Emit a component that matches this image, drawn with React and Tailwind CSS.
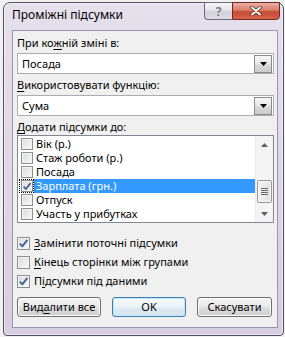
import React from "react";

function Tick({ color = "#42609e" }) {
  return (
    <svg width="11" height="11" viewBox="0 0 11 11" className="block">
      <path d="M1.8 5.6 L4.3 8.3 L9.4 1.8" stroke={color} strokeWidth="1.9" fill="none" strokeLinejoin="round" />
    </svg>
  );
}

function Check({ checked, small }) {
  return (
    <span
      className={
        small
          ? "w-[12px] h-[12px] border border-[#8e8f8f] bg-[linear-gradient(135deg,#d9d9d9,#fbfbfb)] shadow-[inset_0_0_0_1px_#f4f4f4] flex items-center justify-center shrink-0"
          : "w-[13px] h-[13px] border border-[#8e8f8f] bg-[linear-gradient(135deg,#d9d9d9,#fbfbfb)] shadow-[inset_0_0_0_1px_#f4f4f4] flex items-center justify-center shrink-0"
      }
    >
      {checked && <Tick />}
    </span>
  );
}

function DropArrow() {
  return (
    <svg width="7" height="4" viewBox="0 0 7 4" className="block">
      <path d="M0 0 H7 L3.5 4 Z" fill="#000" />
    </svg>
  );
}

function Combo({ value }) {
  return (
    <div className="h-[21px] border border-[#abadb3] bg-white flex items-center">
      <div className="flex-1 pl-[4px] leading-[19px]">{value}</div>
      <div className="w-[18px] h-[18px] mr-[1px] border border-[#8a8a8a] bg-[linear-gradient(to_bottom,#f5f5f5_0%,#e9e9e9_45%,#d9d9d9_55%,#cdcdcd_100%)] flex items-center justify-center">
        <DropArrow />
      </div>
    </div>
  );
}

const items = [
  { t: "Вік (р.)" },
  { t: "Стаж роботи (р.)" },
  { t: "Посада" },
  { t: "Зарплата (грн.)", checked: true, sel: true },
  { t: "Отпуск" },
  { t: "Участь у прибутках" },
];

function Btn({ children, def, w }) {
  return (
    <div
      className={
        def
          ? `${w} h-[20px] rounded-[3px] border border-[#3c7fb1] bg-[linear-gradient(to_bottom,#f5fafd_0%,#ecf5fb_45%,#dfeaf2_55%,#d6e4ee_100%)] shadow-[inset_0_0_0_1px_#c4e6f9] flex items-center justify-center leading-[18px]`
          : `${w} h-[20px] rounded-[3px] border border-[#707070] bg-[linear-gradient(to_bottom,#f2f2f2_0%,#ebebeb_45%,#dddddd_55%,#cfcfcf_100%)] shadow-[inset_0_0_0_1px_#fcfcfc] flex items-center justify-center leading-[18px]`
      }
    >
      {children}
    </div>
  );
}

export default function App() {
  return (
    <div className="w-[285px] h-[337px] overflow-hidden bg-[#f1f1f1] pt-[2px] pl-[3px] font-['Noto_Sans','DejaVu_Sans',sans-serif] text-[11px] text-black">
      <div className="w-[281px] h-[334px] border border-[#50505f] rounded-t-[7px] rounded-b-[4px] bg-[linear-gradient(to_bottom,#e6e0ec,#d7cee1)] shadow-[inset_0_0_0_1px_rgba(255,255,255,0.55)] flex flex-col">
        <div className="h-[27px] flex justify-between items-start">
          <div className="pl-[8px] pt-[4px] leading-[16px] text-[12px]">Проміжні підсумки</div>
          <div className="flex -mt-[1px] mr-[3px]">
            <div className="w-[28px] h-[18px] border border-[#6b6a7b] border-r-0 rounded-bl-[4px] bg-[linear-gradient(to_bottom,#f7f5f9_0%,#e6e3ea_45%,#d2ced9_55%,#e0dde6_100%)] flex items-center justify-center">
              <span className="font-bold text-[13px] leading-[14px] text-[#77778a] [text-shadow:0_0_1px_#fff,0_0_1px_#fff]">?</span>
            </div>
            <div className="w-[48px] h-[18px] border border-[#6e2a22] rounded-br-[4px] bg-[linear-gradient(to_bottom,#eab0a3_0%,#d9806c_45%,#c84a32_55%,#d4644b_100%)] flex items-center justify-center">
              <svg width="12" height="10" viewBox="0 0 12 10" className="block">
                <path d="M2 1.5 L10 8.5 M10 1.5 L2 8.5" stroke="#6b2a20" strokeWidth="3.6" strokeLinecap="round" />
                <path d="M2 1.5 L10 8.5 M10 1.5 L2 8.5" stroke="#fff" strokeWidth="2" strokeLinecap="round" />
              </svg>
            </div>
          </div>
        </div>
        <div className="ml-[8px] w-[266px] h-[298px] border border-[#9894ab] bg-[#f0f0f0] flex flex-col pl-[4px] pr-[3px] pt-[4px]">
          <div className="h-[16px] leading-[16px]">
            При ко<u className="underline-offset-2">ж</u>ній зміні в:
          </div>
          <div className="mt-[2px]">
            <Combo value="Посада" />
          </div>
          <div className="mt-[3px] h-[16px] leading-[16px]">
            <u className="underline-offset-2">В</u>икористовувати функцію:
          </div>
          <div className="mt-[2px]">
            <Combo value="Сума" />
          </div>
          <div className="mt-[3px] h-[16px] leading-[16px]">
            <u className="underline-offset-2">Д</u>одати підсумки до:
          </div>
          <div className="h-[88px] border border-[#828790] bg-white flex">
            <div className="flex-1 flex flex-col pt-[1px]">
              {items.map((it) => (
                <div key={it.t} className="h-[14px] flex items-stretch pl-[1px]">
                  <div
                    className={
                      it.sel
                        ? "w-[15px] border border-dotted border-black flex items-center justify-center"
                        : "w-[15px] flex items-center justify-center"
                    }
                  >
                    <Check checked={it.checked} small />
                  </div>
                  <div
                    className={
                      it.sel
                        ? "flex-1 bg-[#3399ff] text-white pl-[2px] leading-[14px]"
                        : "flex-1 pl-[2px] leading-[14px]"
                    }
                  >
                    {it.t}
                  </div>
                </div>
              ))}
            </div>
            <div className="w-[18px] bg-[#f4f4f4] border-l border-[#ebebeb] flex flex-col">
              <div className="h-[17px] flex items-center justify-center">
                <svg width="7" height="4" viewBox="0 0 7 4" className="block">
                  <path d="M0 4 H7 L3.5 0 Z" fill="#606060" />
                </svg>
              </div>
              <div className="h-[27px]" />
              <div className="h-[23px] mx-[1px] rounded-[2px] border border-[#979797] bg-[linear-gradient(to_right,#f2f2f2,#e2e2e2)] shadow-[inset_0_0_0_1px_#fafafa] flex flex-col items-center justify-center gap-[1px]">
                <div className="w-[7px] h-[1px] bg-[#6a6a6a]" />
                <div className="w-[7px] h-[1px] bg-[#6a6a6a]" />
                <div className="w-[7px] h-[1px] bg-[#6a6a6a]" />
                <div className="w-[7px] h-[1px] bg-[#6a6a6a]" />
              </div>
              <div className="flex-1" />
              <div className="h-[17px] flex items-center justify-center">
                <svg width="7" height="4" viewBox="0 0 7 4" className="block">
                  <path d="M0 0 H7 L3.5 4 Z" fill="#606060" />
                </svg>
              </div>
            </div>
          </div>
          <div className="mt-[11px] flex flex-col">
            <div className="h-[19px] flex items-center gap-[4px]">
              <Check checked />
              <span>
                <u className="underline-offset-2">З</u>амінити поточні підсумки
              </span>
            </div>
            <div className="h-[19px] flex items-center gap-[4px]">
              <Check />
              <span>
                <u className="underline-offset-2">К</u>інець сторінки між групами
              </span>
            </div>
            <div className="h-[19px] flex items-center gap-[4px]">
              <Check checked />
              <span>
                П<u className="underline-offset-2">і</u>дсумки під даними
              </span>
            </div>
          </div>
          <div className="mt-[6px] flex gap-[11px]">
            <Btn w="w-[84px]">
              Вид<u className="underline-offset-2">а</u>лити все
            </Btn>
            <Btn w="w-[74px]" def>
              OK
            </Btn>
            <Btn w="w-[75px]">Скасувати</Btn>
          </div>
        </div>
      </div>
    </div>
  );
}
